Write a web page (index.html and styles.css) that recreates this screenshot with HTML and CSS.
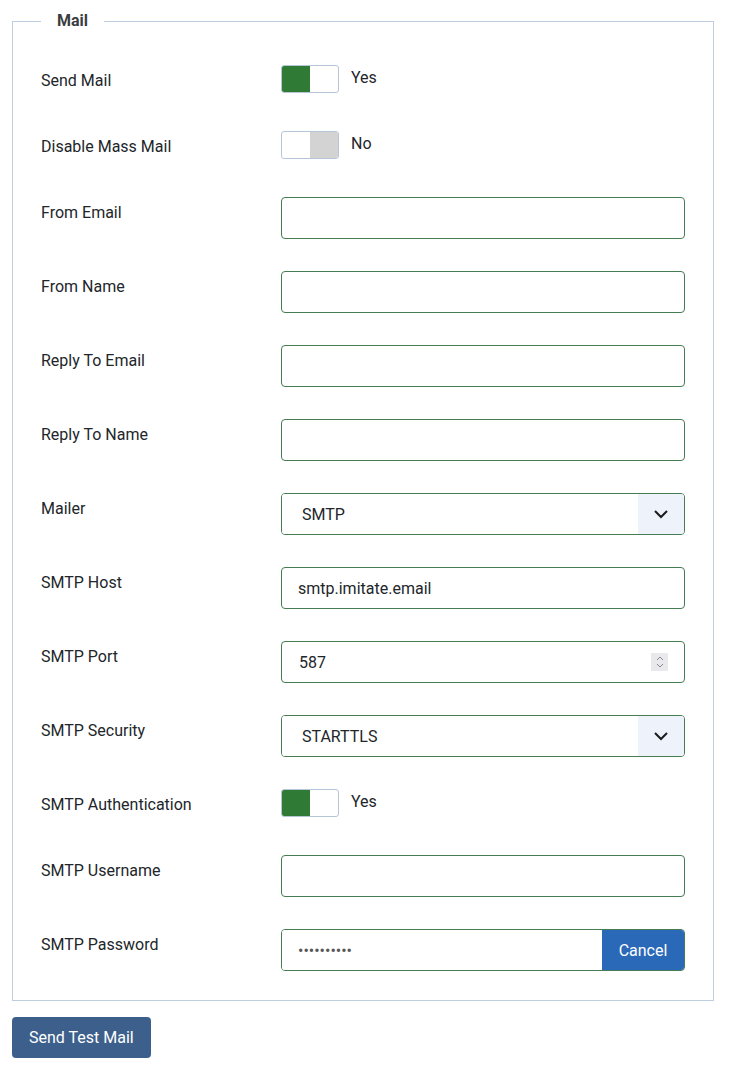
FILE: index.html
```html
<!DOCTYPE html>
<html lang="en">
<head>
    <meta charset="UTF-8">
    <meta name="viewport" content="width=device-width, initial-scale=1.0">
    <title>Mail Settings</title>
    <link rel="stylesheet" href="styles.css">
</head>
<body>
    <div class="page">
        <fieldset class="mail">
            <legend>Mail</legend>

            <div class="row">
                <label class="row-label">Send Mail</label>
                <div class="switch-wrap">
                    <span class="switch on"><span class="knob"></span></span>
                    <span class="switch-text">Yes</span>
                </div>
            </div>

            <div class="row">
                <label class="row-label">Disable Mass Mail</label>
                <div class="switch-wrap">
                    <span class="switch off"><span class="knob"></span></span>
                    <span class="switch-text">No</span>
                </div>
            </div>

            <div class="row">
                <label class="row-label" for="fromEmail">From Email</label>
                <input class="field" type="text" id="fromEmail">
            </div>

            <div class="row">
                <label class="row-label" for="fromName">From Name</label>
                <input class="field" type="text" id="fromName">
            </div>

            <div class="row">
                <label class="row-label" for="replyEmail">Reply To Email</label>
                <input class="field" type="text" id="replyEmail">
            </div>

            <div class="row">
                <label class="row-label" for="replyName">Reply To Name</label>
                <input class="field" type="text" id="replyName">
            </div>

            <div class="row">
                <label class="row-label" for="mailer">Mailer</label>
                <div class="select">
                    <select id="mailer"><option>SMTP</option></select>
                    <span class="caret">
                        <svg width="16" height="10" viewBox="0 0 16 10"><path d="M2 2 L8 8 L14 2" fill="none" stroke="#1b1b1b" stroke-width="2"/></svg>
                    </span>
                </div>
            </div>

            <div class="row">
                <label class="row-label" for="smtpHost">SMTP Host</label>
                <input class="field" type="text" id="smtpHost" value="smtp.imitate.email">
            </div>

            <div class="row">
                <label class="row-label" for="smtpPort">SMTP Port</label>
                <div class="number">
                    <input type="text" id="smtpPort" value="587">
                    <span class="spin">
                        <svg width="10" height="14" viewBox="0 0 10 14"><path d="M2 5 L5 2 L8 5 M2 9 L5 12 L8 9" fill="none" stroke="#8a8a8a" stroke-width="1"/></svg>
                    </span>
                </div>
            </div>

            <div class="row">
                <label class="row-label" for="smtpSecurity">SMTP Security</label>
                <div class="select">
                    <select id="smtpSecurity"><option>STARTTLS</option></select>
                    <span class="caret">
                        <svg width="16" height="10" viewBox="0 0 16 10"><path d="M2 2 L8 8 L14 2" fill="none" stroke="#1b1b1b" stroke-width="2"/></svg>
                    </span>
                </div>
            </div>

            <div class="row">
                <label class="row-label">SMTP Authentication</label>
                <div class="switch-wrap">
                    <span class="switch on"><span class="knob"></span></span>
                    <span class="switch-text">Yes</span>
                </div>
            </div>

            <div class="row">
                <label class="row-label" for="smtpUser">SMTP Username</label>
                <input class="field" type="text" id="smtpUser">
            </div>

            <div class="row">
                <label class="row-label" for="smtpPass">SMTP Password</label>
                <div class="password">
                    <input type="password" id="smtpPass" value="xxxxxxxxxx">
                    <button type="button" class="cancel">Cancel</button>
                </div>
            </div>
        </fieldset>

        <button type="button" class="test-mail">Send Test Mail</button>
    </div>
</body>
</html>
```

FILE: styles.css
```css
body { margin: 0; padding: 0; font-family: Roboto, "Liberation Sans", sans-serif; font-size: 16px; color: #22262a; background: #fff; }
.page { width: 702px; margin-left: 12px; padding-top: 12px; }

.mail { margin: 0 0 16px; padding: 35px 28px 29px; border: 1px solid #bfcde0; }
.mail legend { padding: 0 16px; font-weight: 700; font-size: 16px; line-height: 18px; color: #3b3d40; }

.row { display: grid; grid-template-columns: 240px 404px; margin-bottom: 32px; }
.row:last-child { margin-bottom: 0; }
.row-label { padding-top: 4px; line-height: 24px; color: #22262a; }

.switch-wrap { display: flex; align-items: flex-start; gap: 12px; height: 34px; }
.switch { display: flex; width: 56px; height: 26px; border: 1px solid #b7c5d8; border-radius: 3px; overflow: hidden; background: #fff; }
.switch .knob { width: 50%; height: 100%; }
.switch.on .knob { background: #2f7a34; }
.switch.off { justify-content: flex-end; }
.switch.off .knob { background: #d3d3d3; }
.switch-text { line-height: 26px; }

.field { box-sizing: border-box; width: 404px; height: 42px; padding: 0 16px; border: 1px solid #457c52; border-radius: 4px; font: inherit; color: #22262a; background: #fff; }

.select { display: flex; box-sizing: border-box; width: 404px; height: 42px; border: 1px solid #457c52; border-radius: 4px; overflow: hidden; }
.select select { flex: 1; appearance: none; -webkit-appearance: none; border: none; padding: 0 20px; font: inherit; color: #22262a; background: #fff; outline: none; }
.select .caret { display: flex; align-items: center; justify-content: center; width: 46px; background: #eef2fa; }

.number { display: flex; align-items: center; box-sizing: border-box; width: 404px; height: 42px; padding: 0 16px 0 17px; border: 1px solid #457c52; border-radius: 4px; }
.number input { flex: 1; border: none; padding: 0; font: inherit; color: #22262a; outline: none; }
.number .spin { display: flex; align-items: center; justify-content: center; width: 17px; height: 18px; background: #e9e9ed; }

.password { display: flex; box-sizing: border-box; width: 404px; height: 42px; border: 1px solid #457c52; border-radius: 4px; overflow: hidden; }
.password input { flex: 1; border: none; padding: 0 16px; font: inherit; color: #555; outline: none; }
.cancel { width: 82px; border: none; background: #2a69b8; color: #fff; font: inherit; cursor: pointer; }

.test-mail { height: 41px; padding: 0 17px; border: none; border-radius: 4px; background: #3d5f8c; color: #fff; font: inherit; cursor: pointer; }
```
